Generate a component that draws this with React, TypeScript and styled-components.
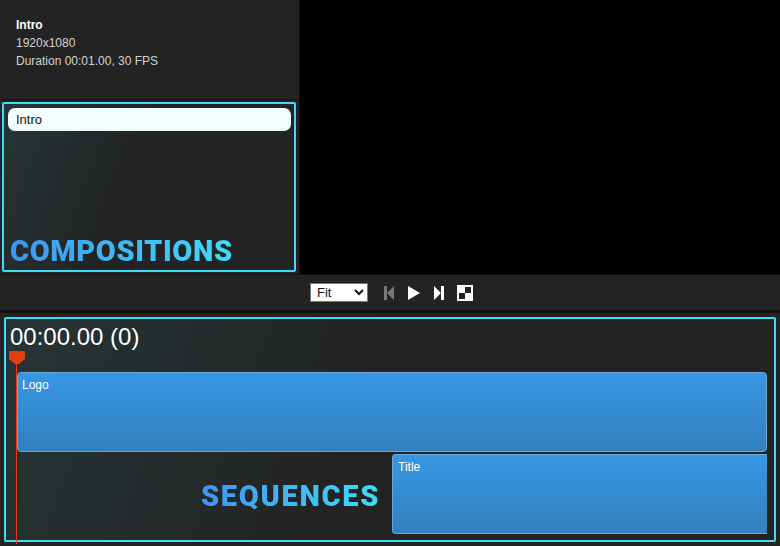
import { createGlobalStyle, styled } from 'styled-components';

const GlobalStyle = createGlobalStyle`
  html, body {
    margin: 0;
    background: #1a1a1a;
    overflow: hidden;
  }
  * {
    box-sizing: border-box;
  }
`;

const Page = styled.div`
  width: 780px;
  height: 546px;
  display: flex;
  flex-direction: column;
  overflow: hidden;
  font-family: 'Liberation Sans', Arial, sans-serif;
  background: #111;
`;

const TopRow = styled.div`
  height: 274px;
  display: flex;
`;

const Sidebar = styled.div`
  width: 299px;
  display: flex;
  flex-direction: column;
  gap: 1px;
  background: #111;
`;

const InfoPanel = styled.div`
  height: 99px;
  padding: 16px 16px;
  background: #232323;
  font-size: 12px;
  line-height: 18px;
  color: #d2d2d2;
`;

const InfoTitle = styled.div`
  font-weight: bold;
  color: #fff;
`;

const CompositionsWrap = styled.div`
  flex: 1;
  padding: 2px 3px 2px 2px;
  background: #232323;
`;

const Framed = styled.div`
  border: 2px solid #3fdcf5;
  border-radius: 2px;
  background: linear-gradient(110deg, #273435 0%, #232323 45%);
`;

const CompositionsPanel = styled(Framed)`
  height: 100%;
  padding: 4px 3px 3px 4px;
  display: flex;
  flex-direction: column;
`;

const CompositionItem = styled.div`
  height: 23px;
  padding: 1px 8px 0;
  border-radius: 7px;
  background: #f2feff;
  color: #111;
  font-size: 13px;
  line-height: 22px;
`;

const Label = styled.div<{ $spacing: number }>`
  font-family: Roboto, 'Open Sans', sans-serif;
  font-weight: 900;
  font-size: 29px;
  line-height: 32px;
  letter-spacing: ${(p) => p.$spacing}px;
  background: linear-gradient(90deg, #3f95f2 0%, #3fdcf8 100%);
  -webkit-background-clip: text;
  background-clip: text;
  color: transparent;
`;

const CompositionsLabel = styled(Label)`
  margin-top: auto;
  margin-left: 2px;
  width: fit-content;
`;

const Preview = styled.div`
  flex: 1;
  margin-left: 1px;
  background: #000;
`;

const Toolbar = styled.div`
  height: 35px;
  margin-top: 1px;
  display: flex;
  align-items: center;
  justify-content: center;
  gap: 9px;
  padding-left: 3px;
  background: #232323;
`;

const ZoomSelect = styled.select`
  width: 58px;
  height: 19px;
  margin-right: 4px;
  padding: 0 0 0 2px;
  border: 1px solid #777;
  border-radius: 0;
  background: #fff;
  color: #111;
  font-family: 'Liberation Sans', Arial, sans-serif;
  font-size: 13px;
`;

const ToolIcon = styled.svg<{ $dim?: boolean; $shift?: number }>`
  width: 16px;
  height: 16px;
  display: block;
  margin-left: ${(p) => p.$shift ?? 0}px;
  fill: ${(p) => (p.$dim ? '#777' : '#fff')};
`;

const Timeline = styled.div`
  flex: 1;
  margin-top: 3px;
  padding: 4px 4px 4px;
  background: #232323;
`;

const TimelinePanel = styled(Framed)`
  position: relative;
  height: 100%;
  padding: 3px 7px 0 11px;
`;

const Timecode = styled.div`
  margin-left: -7px;
  height: 30px;
  color: #fff;
  font-size: 24px;
  line-height: 30px;
`;

const Tracks = styled.div`
  margin-top: 20px;
  display: flex;
  flex-direction: column;
  gap: 2px;
`;

const Track = styled.div`
  height: 80px;
  display: flex;
`;

const TrackLabelArea = styled.div`
  width: 50%;
  padding: 4px 12px 0 0;
  display: flex;
  align-items: center;
  justify-content: flex-end;
`;

const Sequence = styled.div`
  flex: 1;
  padding: 5px 4px;
  border: 1px solid #6aa8dc;
  border-radius: 4px;
  background: linear-gradient(180deg, #3797e4 0%, #3380bd 100%);
  color: #fff;
  font-size: 12px;
  line-height: 14px;
`;

const LastSequence = styled(Sequence)`
  border-right: none;
  border-radius: 4px 0 0 4px;
  padding-left: 5px;
`;

const Playhead = styled.div`
  position: absolute;
  left: 10px;
  top: 32px;
  bottom: -4px;
  width: 1px;
  background: #e33d14;
`;

const PlayheadCap = styled.svg`
  position: absolute;
  left: -7px;
  top: 0;
  width: 16px;
  height: 13px;
  display: block;
  fill: #e33d14;
`;

export default function App() {
  return (
    <Page>
      <GlobalStyle />
      <TopRow>
        <Sidebar>
          <InfoPanel>
            <InfoTitle>Intro</InfoTitle>
            <div>1920x1080</div>
            <div>Duration 00:01.00, 30 FPS</div>
          </InfoPanel>
          <CompositionsWrap>
            <CompositionsPanel>
              <CompositionItem>Intro</CompositionItem>
              <CompositionsLabel $spacing={0.6}>COMPOSITIONS</CompositionsLabel>
            </CompositionsPanel>
          </CompositionsWrap>
        </Sidebar>
        <Preview />
      </TopRow>
      <Toolbar>
        <ZoomSelect defaultValue="Fit">
          <option>Fit</option>
        </ZoomSelect>
        <ToolIcon $dim viewBox="0 0 16 16">
          <path d="M3 1h3v14H3zM6 8l7-7v14z" />
        </ToolIcon>
        <ToolIcon viewBox="0 0 16 16">
          <path d="M2 1l12 7-12 7z" />
        </ToolIcon>
        <ToolIcon viewBox="0 0 16 16">
          <path d="M3 1l7 7-7 7zM10 1h3v14h-3z" />
        </ToolIcon>
        <ToolIcon $shift={1} viewBox="0 0 16 16">
          <path fillRule="evenodd" d="M0 0h16v16H0zM2 8v6h6V8zM8 2v6h6V2z" />
        </ToolIcon>
      </Toolbar>
      <Timeline>
        <TimelinePanel>
          <Timecode>00:00.00 (0)</Timecode>
          <Tracks>
            <Track>
              <Sequence>Logo</Sequence>
            </Track>
            <Track>
              <TrackLabelArea>
                <Label $spacing={1.7}>SEQUENCES</Label>
              </TrackLabelArea>
              <LastSequence>Title</LastSequence>
            </Track>
          </Tracks>
          <Playhead>
            <PlayheadCap viewBox="0 0 16 13">
              <path d="M0 1q0-1 1-1h14q1 0 1 1v7l-6 5H6L0 8z" />
            </PlayheadCap>
          </Playhead>
        </TimelinePanel>
      </Timeline>
    </Page>
  );
}
